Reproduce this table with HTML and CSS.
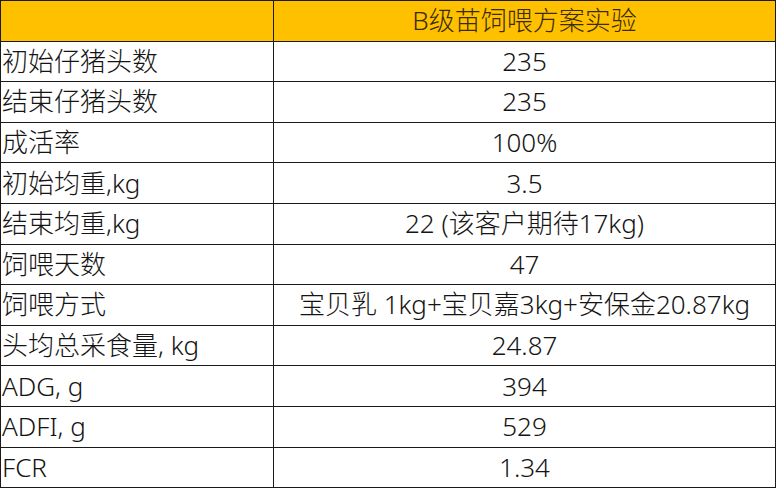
FILE: index.html
```html
<!DOCTYPE html>
<html>
<head>
<meta charset="utf-8">
<link rel="stylesheet" href="styles.css">
</head>
<body>
<table class="grid">
  <colgroup><col class="c1"><col class="c2"></colgroup>
  <tr class="head"><td></td><td class="val">B级苗饲喂方案实验</td></tr>
  <tr><td>初始仔猪头数</td><td class="val">235</td></tr>
  <tr><td>结束仔猪头数</td><td class="val">235</td></tr>
  <tr><td>成活率</td><td class="val">100%</td></tr>
  <tr><td>初始均重,kg</td><td class="val">3.5</td></tr>
  <tr><td>结束均重,kg</td><td class="val">22 (该客户期待17kg)</td></tr>
  <tr><td>饲喂天数</td><td class="val">47</td></tr>
  <tr><td>饲喂方式</td><td class="val">宝贝乳 1kg+宝贝嘉3kg+安保金20.87kg</td></tr>
  <tr><td>头均总采食量, kg</td><td class="val">24.87</td></tr>
  <tr><td>ADG, g</td><td class="val">394</td></tr>
  <tr><td>ADFI, g</td><td class="val">529</td></tr>
  <tr><td>FCR</td><td class="val">1.34</td></tr>
</table>
</body>
</html>
```
FILE: styles.css
```css
html, body {
  margin: 0;
  padding: 0;
  background: #ffffff;
}
.grid {
  border-collapse: collapse;
  table-layout: fixed;
  width: 776px;
  font-family: "Noto Sans", "Noto Sans CJK SC", sans-serif;
  font-size: 26px;
  font-weight: 300;
  color: #141414;
}
.c1 { width: 273px; }
.grid td {
  border: 1px solid #1a1a1a;
  height: 39.6px;
  padding: 0 0 0 1px;
  line-height: 39px;
  white-space: nowrap;
  overflow: hidden;
}
.grid td.val {
  text-align: center;
  padding: 0;
}
.head td {
  background: #ffc000;
  color: #3a2c0a;
}
```
